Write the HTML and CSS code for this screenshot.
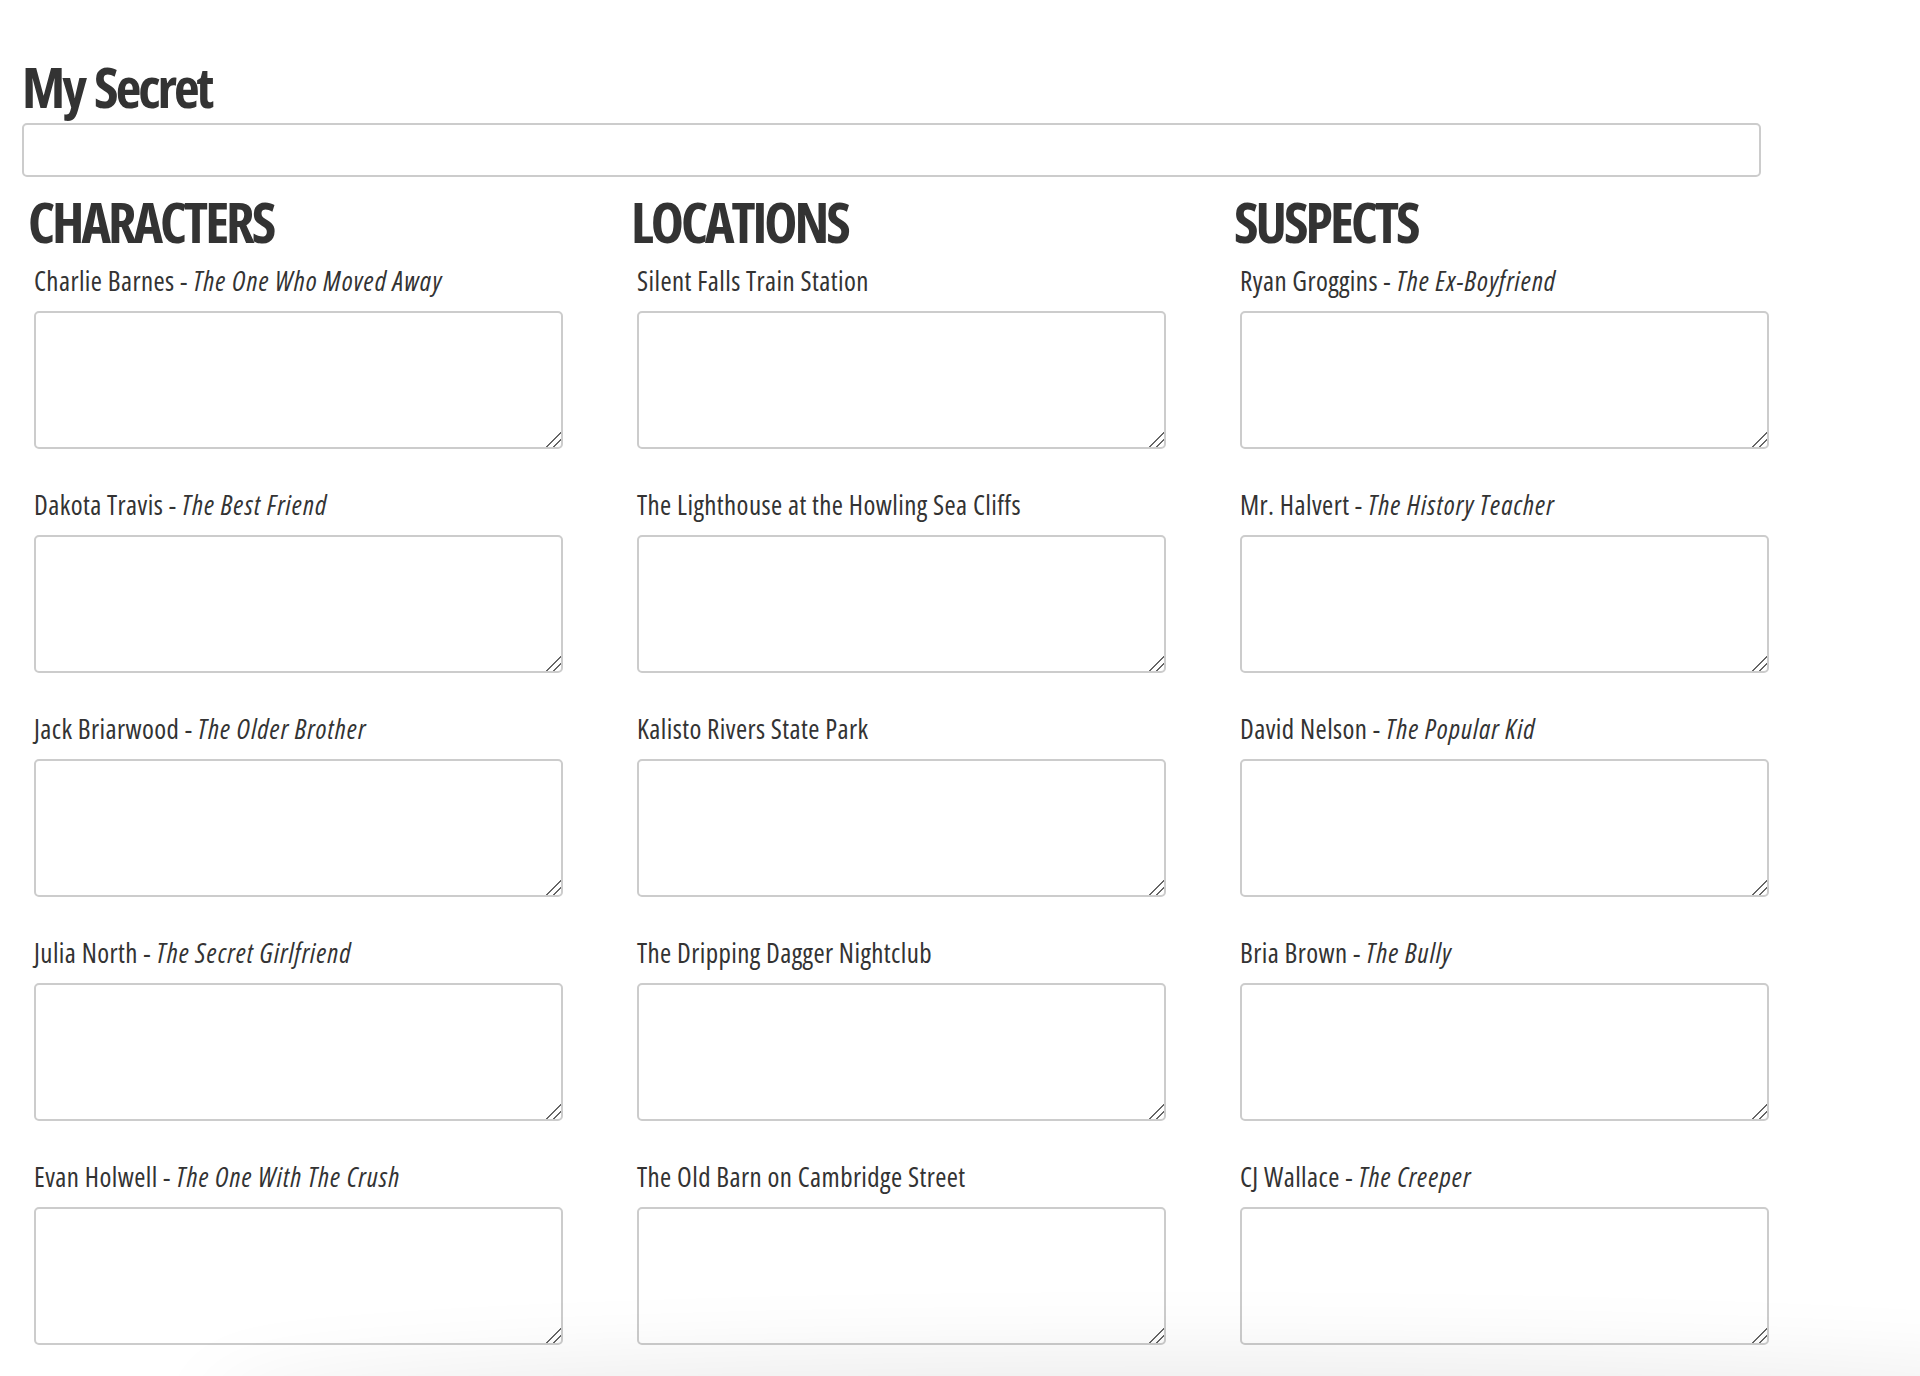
FILE: index.html
```html
<!DOCTYPE html>
<html lang="en">
<head>
<meta charset="utf-8">
<title>My Secret</title>
<link rel="stylesheet" href="styles.css">
</head>
<body>
<main class="page">
  <h1 class="secret-title">My Secret</h1>
  <input class="secret-input" type="text">
  <div class="columns">
    <section class="col">
      <h2 class="col-title">CHARACTERS</h2>
      <div class="items">
        <div class="item"><label class="item-label">Charlie Barnes - <em>The One Who Moved Away</em></label><textarea class="notes"></textarea></div>
        <div class="item"><label class="item-label">Dakota Travis - <em>The Best Friend</em></label><textarea class="notes"></textarea></div>
        <div class="item"><label class="item-label">Jack Briarwood - <em>The Older Brother</em></label><textarea class="notes"></textarea></div>
        <div class="item"><label class="item-label">Julia North - <em>The Secret Girlfriend</em></label><textarea class="notes"></textarea></div>
        <div class="item"><label class="item-label">Evan Holwell - <em>The One With The Crush</em></label><textarea class="notes"></textarea></div>
      </div>
    </section>
    <section class="col">
      <h2 class="col-title">LOCATIONS</h2>
      <div class="items">
        <div class="item"><label class="item-label">Silent Falls Train Station</label><textarea class="notes"></textarea></div>
        <div class="item"><label class="item-label">The Lighthouse at the Howling Sea Cliffs</label><textarea class="notes"></textarea></div>
        <div class="item"><label class="item-label">Kalisto Rivers State Park</label><textarea class="notes"></textarea></div>
        <div class="item"><label class="item-label">The Dripping Dagger Nightclub</label><textarea class="notes"></textarea></div>
        <div class="item"><label class="item-label">The Old Barn on Cambridge Street</label><textarea class="notes"></textarea></div>
      </div>
    </section>
    <section class="col">
      <h2 class="col-title">SUSPECTS</h2>
      <div class="items">
        <div class="item"><label class="item-label">Ryan Groggins - <em>The Ex-Boyfriend</em></label><textarea class="notes"></textarea></div>
        <div class="item"><label class="item-label">Mr. Halvert - <em>The History Teacher</em></label><textarea class="notes"></textarea></div>
        <div class="item"><label class="item-label">David Nelson - <em>The Popular Kid</em></label><textarea class="notes"></textarea></div>
        <div class="item"><label class="item-label">Bria Brown - <em>The Bully</em></label><textarea class="notes"></textarea></div>
        <div class="item"><label class="item-label">CJ Wallace - <em>The Creeper</em></label><textarea class="notes"></textarea></div>
      </div>
    </section>
  </div>
</main>
<div class="bottom-shade"></div>
</body>
</html>
```

FILE: styles.css
```css
* { box-sizing: border-box; }

html, body {
  margin: 0;
  background: #fff;
  overflow: hidden;
}

body {
  font-family: "Open Sans", "Noto Sans", sans-serif;
  font-stretch: 75%;
  color: #333;
}

.page {
  padding: 58px 0 0 22px;
}

.secret-title {
  margin: 0;
  font-size: 56px;
  line-height: 56px;
  font-weight: 700;
  letter-spacing: -3px;
  word-spacing: 3px;
}

.secret-input {
  display: block;
  margin-top: 9px;
  width: 1739px;
  height: 54px;
  border: 2px solid #ccc;
  border-radius: 5px;
  background: #fff;
}

.columns {
  display: grid;
  grid-template-columns: repeat(3, 603px);
  margin: 16px 0 0 6px;
}

.col-title {
  margin: 0;
  font-size: 56px;
  line-height: 56px;
  font-weight: 700;
  letter-spacing: -3px;
}

.items {
  display: flex;
  flex-direction: column;
  gap: 41px;
  margin-top: 17px;
  padding-left: 6px;
}

.item-label {
  display: block;
  font-size: 27px;
  line-height: 30px;
  font-weight: 500;
  letter-spacing: 0.4px;
  margin-bottom: 15px;
}

.item-label em {
  font-style: italic;
  letter-spacing: 1.05px;
}

.notes {
  display: block;
  width: 529px;
  height: 138px;
  border: 2px solid #ccc;
  border-radius: 5px;
  background: #fff;
  resize: both;
}

.notes::-webkit-resizer {
  background: linear-gradient(135deg,
    transparent 0 48%,
    #666 48% 55%,
    transparent 55% 71%,
    #666 71% 78%,
    transparent 78%);
}

.bottom-shade {
  position: fixed;
  left: 220px;
  right: -200px;
  bottom: -60px;
  height: 60px;
  border-radius: 50%;
  box-shadow: 0 0 80px 20px rgba(0, 0, 0, 0.08);
}
```
